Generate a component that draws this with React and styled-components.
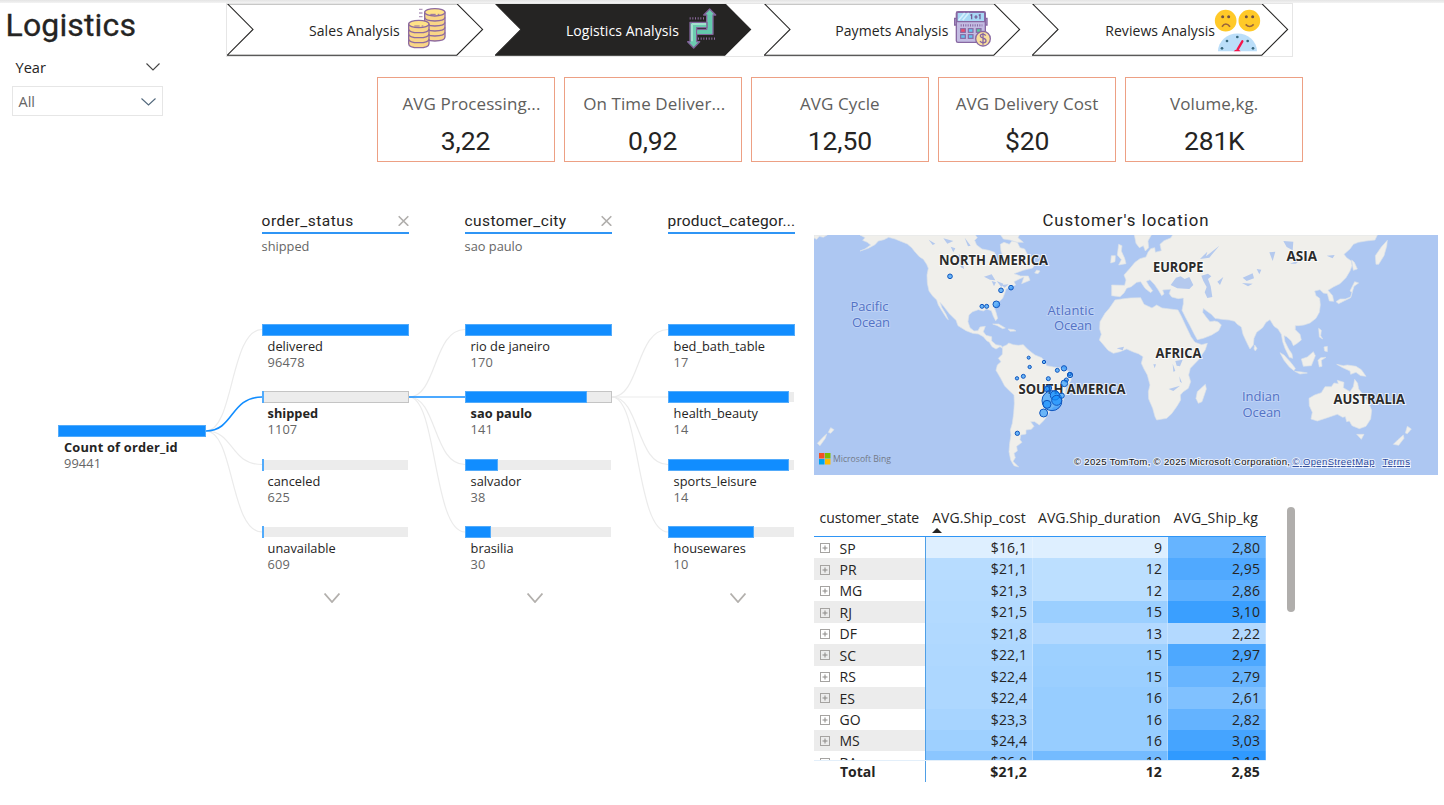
import React from "react";
import styled, { createGlobalStyle } from "styled-components";

const UI = `"Open Sans", "Noto Sans", sans-serif`;
const DIN = `Roboto, "Liberation Sans", sans-serif`;
const BLUE = "#118dff";

const Global = createGlobalStyle`
  * { box-sizing: border-box; }
  body { margin: 0; background: #fff; font-family: ${UI}; color: #252423; overflow: hidden; }
`;

const Page = styled.main`
  width: 1444px;
  height: 805px;
  display: flex;
  flex-direction: column;
  overflow: hidden;
  background: #fff;
`;
const TopStrip = styled.div`
  height: 3px;
  flex: none;
  background: linear-gradient(#e4e4e4, #f3f3f3);
`;
const Header = styled.header`
  display: flex;
  height: 206px;
  flex: none;
`;
const Side = styled.div`
  width: 226px;
  flex: none;
`;
const Title = styled.h1`
  margin: 4px 0 0 5.5px;
  font: 400 32px/36px ${DIN};
  letter-spacing: 0.15px;
  -webkit-text-stroke: 0.3px #252423;
`;
const Slicer = styled.section`
  width: 151px;
  margin: 14px 0 0 11.5px;
`;
const SlicerHead = styled.div`
  display: flex;
  justify-content: space-between;
  align-items: center;
  height: 22px;
  padding: 0 3px 3px 4px;
  font-size: 14.6px;
  font-weight: 500;
`;
const Select = styled.div`
  margin-top: 7px;
  height: 30px;
  padding: 1px 6px 0 6px;
  border: 1px solid #e6e6e6;
  display: flex;
  align-items: center;
  justify-content: space-between;
  font-size: 14.5px;
  color: #666;
`;
const Main = styled.div`
  flex: 1;
`;
const Nav = styled.nav`
  display: flex;
  width: 1067px;
  height: 54px;
  border: 1px solid #e6e6e6;
`;
const NavItem = styled.a`
  position: relative;
  width: 268.4px;
  flex: none;
  height: 51px;
  display: flex;
  align-items: center;
  padding-left: ${(p) => p.$pad}px;
  color: ${(p) => (p.$active ? "#fff" : "#252423")};
`;
const Chevron = styled.svg`
  position: absolute;
  left: 0;
  top: 0;
`;
const NavLabel = styled.span`
  position: relative;
  width: ${(p) => p.$w}px;
  flex: none;
  padding-top: 1px;
  font-size: 14px;
  letter-spacing: 0.07px;
  white-space: nowrap;
`;
const NavIcon = styled.svg`
  position: relative;
  flex: none;
  margin-top: ${(p) => p.$mt || 0}px;
`;
const Kpis = styled.section`
  display: flex;
  gap: 9.2px;
  margin: 20px 0 0 150.5px;
`;
const Kpi = styled.article`
  width: 178px;
  height: 85px;
  border: 1.4px solid #eda084;
  text-align: center;
  padding-top: 14px;
`;
const KpiLabel = styled.div`
  padding-left: ${(p) => p.$shift || 0}px;
  font-size: 17px;
  line-height: 24px;
  color: #605e5c;
  white-space: nowrap;
  letter-spacing: 0.1px;
`;
const KpiValue = styled.div`
  margin-top: 9px;
  font: 400 26.5px/32px ${DIN};
  letter-spacing: -0.15px;
`;

const Body = styled.div`
  display: flex;
  flex: 1;
`;
const Tree = styled.section`
  width: 814px;
  flex: none;
  display: flex;
  padding-left: 58px;
`;
const Root = styled.div`
  width: 147.6px;
  margin-top: 216px;
`;
const Column = styled.div`
  width: ${(p) => p.$w}px;
  flex: none;
`;
const LevelHead = styled.div`
  height: 25px;
  display: flex;
  align-items: center;
  justify-content: space-between;
  border-bottom: 2.5px solid #2f95f5;
  font: 400 15.5px/20px ${DIN};
  letter-spacing: ${(p) => p.$ls}px;
  white-space: nowrap;
`;
const LevelValue = styled.div`
  height: 24px;
  font-size: 12.8px;
  line-height: 24px;
  color: #666;
`;
const Nodes = styled.div`
  margin-top: 65.5px;
`;
const NodeBox = styled.div`
  height: 67.6px;
`;
const Track = styled.div`
  height: 12px;
  background: #ececec;
  border: 1px solid ${(p) => (p.$selected ? "#c4c4c4" : "transparent")};
  background-clip: padding-box;
`;
const Fill = styled.div`
  height: 12px;
  margin: -1px;
  width: ${(p) => p.$w}px;
  background: ${BLUE};
  border: 1px solid #52abfb;
  border-width: 1px 0.5px;
`;
const NodeName = styled.div`
  padding-left: 6px;
  margin-top: 2px;
  font-size: 12.8px;
  line-height: 17px;
  font-weight: ${(p) => (p.$bold ? 700 : 400)};
  letter-spacing: ${(p) => p.$ls || 0}px;
  white-space: nowrap;
`;
const NodeValue = styled.div`
  padding-left: 6px;
  font-size: 12.8px;
  line-height: 15px;
  letter-spacing: 0.1px;
  color: #666;
`;
const Links = styled.svg`
  flex: none;
  margin-top: 114.5px;
`;
const More = styled.div`
  width: 147px;
  margin-top: -1px;
  padding: 0 0 0 62px;
  line-height: 0;
`;

const Right = styled.section`
  width: 624px;
  flex: none;
`;
const MapTitle = styled.h2`
  margin: 0;
  height: 26px;
  text-align: center;
  font: 400 16.8px/23px ${DIN};
  letter-spacing: 1px;
`;
const MapSvg = styled.svg`
  display: block;
`;
const TableWrap = styled.div`
  display: flex;
  margin-top: 31px;
`;
const Matrix = styled.div`
  width: 452px;
`;
const gridCols = "112px 107px 135px 98px";
const HeadRow = styled.div`
  display: grid;
  grid-template-columns: ${gridCols};
  height: 31px;
  border-bottom: 1px solid #2f95f5;
  font-size: 14px;
  line-height: 24px;
`;
const HeadCell = styled.div`
  padding-left: ${(p) => p.$pl}px;
  white-space: nowrap;
  letter-spacing: ${(p) => p.$ls || 0}px;
`;
const SortMark = styled.svg`
  display: block;
  margin-top: -2.5px;
`;
const Rows = styled.div`
  height: 222.5px;
  overflow: hidden;
`;
const Row = styled.div`
  display: grid;
  grid-template-columns: ${gridCols};
  height: 21.45px;
  font-size: 14px;
  line-height: 21.5px;
`;
const StateCell = styled.div`
  display: flex;
  align-items: center;
  gap: 9.5px;
  padding-left: 6px;
  background: ${(p) => (p.$alt ? "#ececec" : "#fff")};
  border-right: 1px solid #4f9fe6;
`;
const Cell = styled.div`
  background: ${(p) => p.$bg};
  border-right: 1px solid rgba(255, 255, 255, 0.25);
  border-bottom: 1px solid rgba(255, 255, 255, 0.25);
  padding-right: 5px;
  text-align: right;
  letter-spacing: 0.1px;
`;
const TotalRow = styled(Row)`
  font-weight: 700;
  border-top: 1px solid #e3effa;
  line-height: 21px;
`;
const TotalName = styled.div`
  padding-left: 26px;
  border-right: 1px solid #4f9fe6;
`;
const TotalCell = styled.div`
  text-align: right;
  padding-right: 6px;
  letter-spacing: 0.15px;
`;
const ScrollThumb = styled.div`
  width: 8px;
  height: 105px;
  margin: 1px 0 0 21px;
  border-radius: 4px;
  background: #b0aeac;
`;

const Down = ({ w, h, color, sw = 1.1 }) => (
  <svg width={w} height={h} viewBox={`0 0 ${w} ${h}`} fill="none" stroke={color} strokeWidth={sw}>
    <path d={`M.5 .5 L${w / 2} ${h - 1} L${w - 0.5} .5`} />
  </svg>
);

const Coin = ({ x, y, n, w }) => (
  <g fill="#f9d686" stroke="#8d6a9f" strokeWidth="4">
    {Array.from({ length: n }, (_, i) => n - 1 - i).map((i) => (
      <path key={i} d={`M${x} ${y + i * 15} v14 c0 16 ${w} 16 ${w} 0 v-14`} />
    ))}
    <ellipse cx={x + w / 2} cy={y} rx={w / 2} ry="11" fill="#ffe287" />
    <path d={`M${x + 17} ${y + 6} h16 m6 0 h5`} strokeWidth="3" />
  </g>
);
const CoinsIcon = () => (
  <NavIcon width="40" height="44" viewBox="1221 20 120 132" $mt={-1}>
    <path d="M1258 27h9M1258 38h9M1258 49h9" stroke="#8d6a9f" strokeWidth="4" strokeDasharray="4 2" />
    <Coin x={1274} y={36} n={5} w={61} />
    <Coin x={1226} y={71} n={4} w={61} />
  </NavIcon>
);
const RouteIcon = () => (
  <NavIcon width="32" height="42" viewBox="858 20 96 126" $mt={-3}>
    <g fill="none" stroke="#8d6a9f" strokeWidth="7" strokeDasharray="3 5">
      <path d="M869 54h48M894 115h52" />
    </g>
    <g fill="#6ccbb0" stroke="#81639a" strokeWidth="4" strokeLinejoin="round">
      <path d="M929 26 L947 44 H939 V102 H889 V88 H920 V44 H911 Z" />
      <path d="M870 66 H921 V82 H890 V124 H899 L881 143 L863 124 H870 Z" />
    </g>
    <path d="M876 71v52M876 71h42" stroke="#a2e0cd" strokeWidth="6" />
    <path d="M892 95h38V44" fill="none" stroke="#62c9ac" strokeWidth="10" />
  </NavIcon>
);
const CalcIcon = () => (
  <NavIcon width="39" height="38" viewBox="280 30 117 114" $mt={-1}>
    <g stroke="#8868a2" strokeWidth="4">
      <path d="M289 55h-4v20h4M378 55h4v20h-4" fill="#b9b2dc" />
      <rect x="290" y="35" width="87" height="92" rx="5" fill="#c3bce2" />
      <path d="M292 37h83v28h-83z" fill="#a7d8f5" />
      <g fill="#62c3ef" strokeWidth="3.5">
        <rect x="303" y="86" width="14" height="11" fill="#ee4b69" />
        <rect x="326" y="86" width="14" height="11" />
        <rect x="350" y="86" width="14" height="11" fill="#5bc8a0" />
        <rect x="303" y="104" width="14" height="11" />
        <rect x="326" y="104" width="14" height="11" />
      </g>
      <path d="M303 76h65" strokeWidth="7" strokeDasharray="3 4" />
      <circle cx="370" cy="116" r="22" fill="#f9df9d" />
      <path d="M378 107c-3-6-16-6-16 1 0 8 17 5 17 14 0 8-15 8-18 1M370 98v36" fill="none" />
    </g>
    <path d="M297 61l18-22M309 61l18-22" stroke="#d5effd" strokeWidth="5" />
    <path d="M332 46l4-2v14M354 51h-10M349 46v10M357 46l4-2v14" fill="none" stroke="#70518d" strokeWidth="3.5" />
  </NavIcon>
);
const ReviewsIcon = () => (
  <NavIcon width="47" height="43" viewBox="1062 26 141 129" $mt={1}>
    <circle cx="1097" cy="61" r="32.5" fill="#ffc928" />
    <circle cx="1168" cy="61" r="32.5" fill="#ffc928" />
    <g fill="#705044">
      <circle cx="1088" cy="49" r="4.5" /><circle cx="1106" cy="49" r="4.5" />
      <circle cx="1159" cy="49" r="4.5" /><circle cx="1178" cy="49" r="4.5" />
    </g>
    <path d="M1086 79q11-16 24 0M1157 72q12 13 24 0" fill="none" stroke="#9a653b" strokeWidth="5" />
    <path d="M1074 153a58 53 0 0 1 117 0z" fill="#bbdef9" />
    <g fill="#37667c">
      <circle cx="1086" cy="144" r="4" /><circle cx="1101" cy="122" r="4" /><circle cx="1132" cy="110" r="4" />
      <circle cx="1163" cy="122" r="4" /><circle cx="1179" cy="144" r="4" />
    </g>
    <path d="M1121 153a12 11 0 0 1 21 0z" fill="#f5144b" />
    <path d="M1133 147l14-24" stroke="#f5144b" strokeWidth="7" strokeLinecap="round" />
  </NavIcon>
);

const navItems = [
  { label: "Sales Analysis", pad: 82, w: 98, Icon: CoinsIcon },
  { label: "Logistics Analysis", pad: 70.5, w: 120, Icon: RouteIcon, active: true },
  { label: "Paymets Analysis", pad: 71.5, w: 117.5, Icon: CalcIcon },
  { label: "Reviews Analysis", pad: 73, w: 108.5, Icon: ReviewsIcon },
];

const kpis = [
  ["AVG Processing...", "3,22", 12],
  ["On Time Deliver...", "0,92", 3],
  ["AVG Cycle", "12,50"],
  ["AVG Delivery Cost", "$20"],
  ["Volume,kg.", "281K"],
];

const levels = [
  {
    name: "order_status", value: "shipped", w: 147, ls: 0.5, from: 107, active: 1,
    nodes: [["delivered", 96478, 147], ["shipped", 1107, 2], ["canceled", 625, 1], ["unavailable", 609, 1]], selected: 1,
  },
  {
    name: "customer_city", value: "sao paulo", w: 147, ls: 0.4, from: 73, active: 1,
    nodes: [["rio de janeiro", 170, 147], ["sao paulo", 141, 122], ["salvador", 38, 33], ["brasilia", 30, 26]], selected: 1,
  },
  {
    name: "product_categor...", value: "", w: 127, ls: 0.2, from: 73,
    nodes: [["bed_bath_table", 17, 127], ["health_beauty", 14, 121], ["sports_leisure", 14, 121], ["housewares", 10, 86]],
  },
];

const Connector = ({ from, active }) => {
  const ends = [5.5, 73, 140.5, 208];
  const d = (y) => `M0 ${from} C28 ${from} 24 ${y} 56 ${y}`;
  return (
    <Links width="56" height="216" viewBox="0 0 56 216" fill="none">
      {ends.map((y, i) => i !== active && <path key={i} d={d(y)} stroke="#ebebeb" strokeWidth="1.2" />)}
      {active !== undefined && <path d={d(ends[active])} stroke={BLUE} strokeWidth="1.6" />}
    </Links>
  );
};

const Level = ({ level }) => (
  <>
    <Connector from={level.from} active={level.active} />
    <Column $w={level.w}>
      <LevelHead $ls={level.ls}>
        <span>{level.name}</span>
        {level.value && (
          <svg width="11" height="11" viewBox="0 0 11 11" stroke="#b0aeac" strokeWidth="1.6">
            <path d="M.7 1.2l9.6 9.6M10.3 1.2L.7 10.8" />
          </svg>
        )}
      </LevelHead>
      <LevelValue>{level.value}</LevelValue>
      <Nodes>
        {level.nodes.map(([name, value, w], i) => (
          <NodeBox key={name}>
            <Track $selected={level.selected === i}><Fill $w={w} /></Track>
            <NodeName $bold={level.selected === i}>{name}</NodeName>
            <NodeValue>{value}</NodeValue>
          </NodeBox>
        ))}
      </Nodes>
      <More><Down w={16} h={10} color="#b3b0ad" sw={1.8} /></More>
    </Column>
  </>
);

const americas = [
  "M12 90H52L40 97 28 94 20 103 12 99Z",
  "M150 90L165 98 158 106 172 112 182 120 165 132 150 138 175 130 195 119 205 108 222 104 236 97 255 102 275 110 292 117 305 128 316 142 328 155 340 163 350 178 355 190 351 210 352 235 357 258 368 273 380 285 385 300 396 318 410 340 415 344 408 328 396 308 390 292 402 305 418 326 438 346 444 362 468 377 488 385 505 387 520 395 530 407 538 412 546 425 558 432 570 425 580 432 574 422 558 419 545 408 545 395 528 391 520 380 526 364 510 366 504 377 492 378 480 368 474 350 477 330 488 320 505 314 520 318 530 312 544 317 550 334 557 347 563 340 558 322 553 308 565 292 578 280 584 265 588 252 603 246 617 240 612 230 628 222 642 216 635 236 660 226 655 213 632 213 612 206 640 196 668 189 676 176 666 158 652 148 644 132 630 128 622 112 606 108 598 118 582 112 571 118 573 138 580 158 572 178 560 164 554 142 536 136 516 132 500 120 494 106 502 98 496 90Z",
  "M572 90L580 102 600 105 622 112 640 112 624 98 628 90Z",
  "M680 195L690 198 684 206 674 204Z",
  "M548 357L566 357 586 369 578 371 562 362ZM594 372L612 374 618 378 600 379Z",
  "M578 425L590 420 596 414 610 419 625 421 640 419 650 430 663 441 675 450 695 458 705 470 710 482 730 486 758 490 778 500 786 512 782 528 768 548 766 568 758 590 748 601 730 606 722 614 714 630 700 648 688 660 674 650 662 650 672 664 664 673 648 675 648 687 632 690 630 704 636 712 620 724 622 738 612 745 616 758 609 769 626 786 612 782 602 765 597 740 599 715 603 690 601 675 607 655 611 625 613 595 612 570 598 557 584 543 572 520 558 496 562 480 573 470 565 460 577 448Z",
  "M22 715L42 694 50 687 46 700 30 722ZM55 682L62 668 72 674 62 685Z",
  "M926 118L936 122 934 138 944 160 948 176 926 180 934 164 922 150ZM904 152L916 152 915 170 902 174Z",
];
const oldWorld = [
  "M-25 240L14 241 18 225 12 210 30 190 45 172 60 161 78 156 84 142 92 131 104 128 106 142 124 137 120 118 132 107 152 99 158 90H772L765 105 738 108 715 112 700 118 690 132 672 148 680 158 694 168 696 182 690 198 678 218 660 236 640 246 624 256 638 272 641 289 628 288 622 266 610 264 600 254 584 258 588 272 599 280 601 300 598 322 588 340 570 354 552 360 536 362 526 362 526 374 540 388 544 405 530 416 520 422 514 408 500 395 492 392 495 410 506 432 516 447 518 460 508 457 495 430 488 410 484 388 474 372 462 364 450 344 438 352 428 368 410 382 402 400 400 420 390 432 380 412 369 388 364 366 352 358 344 349 328 345 305 343 285 340 274 328 260 318 250 310 248 322 260 338 270 350 284 348 295 351 304 360 296 377 275 390 250 400 232 404 222 386 210 362 197 338 186 316 190 296 190 279 175 281 155 276 148 266 152 253 128 255 132 267 125 272 115 255 103 238 90 224 79 229 86 241 98 257 92 263 75 250 62 230 50 232 34 245 20 250 12 264 0 275-25 272Z",
  "M-15 285L5 282 30 279 62 278 72 298 96 309 110 300 126 309 150 312 174 315 184 334 198 364 213 395 225 412 245 419 262 415 256 434 235 465 211 490 206 510 212 530 205 550 190 560 181 570 182 585 172 602 155 626 140 640 110 645 105 635 98 610 86 582 85 560 90 540 82 510 72 492 64 475 69 455 55 446 40 441 20 432 0 440-20 445-36 436-50 419-62 405-56 388-61 372-60 350-45 325-32 310Z",
  "M256 538L259 552 246 590 235 595 228 580 232 560Z",
  "M43 90L48 115 58 128 70 122 76 138 86 128 84 108 94 90Z",
  "M404 420L411 430 406 438 402 432ZM480 443L492 450 512 472 526 490 522 497 508 486 492 466ZM524 499L545 501 562 504 540 507Z",
  "M544 462L562 456 580 440 586 452 574 482 550 484ZM594 466L602 458 618 457 604 466 606 484 598 486Z",
  "M596 370L604 376 602 392 608 402 598 396ZM612 426L622 424 622 440 614 438Z",
  "M650 478L670 482 682 480 708 484 724 494 738 514 722 512 708 502 692 508 690 498 668 488Z",
  "M567 580L584 570 604 563 615 545 634 545 642 534 655 536 652 526 672 532 670 548 690 560 700 545 704 523 713 535 716 552 732 572 746 592 755 616 752 642 738 664 718 671 696 662 688 648 680 650 676 635 668 637 652 628 622 638 592 648 573 642 577 622 568 602Z",
  "M710 688L732 688 724 703Z",
  "M820 718L834 704 850 690 852 700 836 721ZM856 684L862 664 874 672 862 686Z",
  "M648 290L660 282 676 282 692 276 696 262 690 258 704 230 716 234 702 244 692 278 672 288 656 296ZM695 165L703 172 712 192 700 196Z",
  "M768 178L766 152 784 126 802 106 800 124 792 152 776 178Z",
];
const waters = [
  "M152 240L168 218 182 214 194 222 208 216 220 240 208 252 172 250Z",
  "M244 212L264 206 274 214 264 222 272 244 277 276 262 279 254 262 260 246 250 228Z",
  "M368 218L398 205 402 220 380 228ZM366 234L398 236 384 244ZM292 230L310 216 300 240ZM448 142L466 140 458 168ZM410 192L424 194 418 208ZM510 176L540 164 528 176ZM490 108L520 110 518 136 500 126ZM240 162L262 140 258 154 298 122 268 158ZM620 152L644 150 638 160Z",
  "M166 468L188 464 180 484 170 482ZM158 476L166 498 160 500ZM178 514L186 534 180 530ZM146 552L180 542 160 558ZM100 478L108 478 104 490ZM-10 430L12 425 8 436Z",
];
const naWaters = [
  "M522 215L545 208 556 226 540 224ZM545 228L558 232 552 244ZM560 228L580 236 574 246ZM574 240L596 238 584 248ZM446 148L456 152 462 192 452 186ZM422 125L436 130 430 142ZM400 100L430 108 412 116ZM356 104L376 116 368 120ZM464 98L482 122 474 124Z",
];
const dots = [
  [420, 214, 7], [573, 256, 7], [603, 248, 7], [516, 304, 6], [530, 304, 6], [559, 298, 10], [656, 458, 4.5],
  [702, 471, 5], [659, 486, 5], [742, 496, 6], [762, 490, 8], [780, 510, 8], [779, 507, 5], [640, 514, 6], [621, 520, 5],
  [715, 521, 6], [769, 525, 6], [763, 535, 10], [716, 549, 9], [711, 552, 8], [726, 587, 30], [735, 571, 14],
  [740, 586, 15], [755, 572, 8], [711, 598, 12], [701, 624, 12], [622, 685, 6.5],
];
const continents = [
  ["NORTH AMERICA", 125, 30, 109], ["SOUTH AMERICA", 204.5, 159, 107], ["EUROPE", 339, 37, 50.5],
  ["ASIA", 472.5, 26, 30.5], ["AFRICA", 341.5, 122.5, 46], ["AUSTRALIA", 519.5, 169, 71.5],
];
const oceans = [
  ["Pacific", 36.5, 76, 38], ["Ocean", 38, 91.5, 38], ["Atlantic", 233.5, 79.5, 46.5], ["Ocean", 240, 95, 38],
  ["Indian", 428, 166, 38], ["Ocean", 428.5, 182, 38.5],
];
const MapText = styled.text`
  font-family: ${(p) => p.$font || UI};
  font-size: ${(p) => p.$size}px;
  font-weight: ${(p) => p.$weight || 400};
  fill: ${(p) => p.$color};
  stroke: ${(p) => p.$halo || "none"};
  stroke-width: 2px;
  paint-order: stroke;
  text-decoration: ${(p) => (p.$link ? "underline" : "none")};
`;
const credit = { $size: 9.6, $font: `"Liberation Sans", sans-serif`, $halo: "rgba(255,255,255,.7)" };

const WorldMap = () => (
  <MapSvg width="624" height="240" viewBox="0 0 624 240">
    <rect width="624" height="240" fill="#adc7f2" />
    <g transform="translate(-4 -30) scale(.33333)" strokeLinejoin="round">
      <g fill="#f0efeb" stroke="#dde2e8" strokeWidth="2">{americas.map((d) => <path key={d} d={d} />)}</g>
      {naWaters.map((d) => <path key={d} d={d} fill="#b4c9ee" />)}
    </g>
    <g transform="translate(306 -30) scale(.33333)" strokeLinejoin="round">
      <g fill="#f0efeb" stroke="#dde2e8" strokeWidth="2">{oldWorld.map((d) => <path key={d} d={d} />)}</g>
      {waters.map((d) => <path key={d} d={d} fill="#b4c9ee" />)}
    </g>
    {oceans.map(([t, x, y, w], i) => (
      <MapText key={i} x={x} y={y} textLength={w} $size={13} $color="#5373c6" $halo="rgba(200,216,246,.7)">{t}</MapText>
    ))}
    {continents.map(([t, x, y, w]) => (
      <MapText key={t} x={x} y={y} textLength={w} lengthAdjust="spacingAndGlyphs" $size={13.3} $weight={700} $color="#2b2b2b" $halo="rgba(255,255,255,.75)">{t}</MapText>
    ))}
    <g transform="translate(-4 -30) scale(.33333)" fill="rgba(17,141,255,.6)" stroke="#0f55bd" strokeWidth="3">
      {dots.map(([x, y, r], i) => <circle key={i} cx={x} cy={y} r={r} />)}
    </g>
    <path d="M5 218h5.5v5.5H5z" fill="#f25022" />
    <path d="M11 218h5.5v5.5H11z" fill="#7fba00" />
    <path d="M5 224h5.5v5.5H5z" fill="#00a4ef" />
    <path d="M11 224h5.5v5.5H11z" fill="#ffb900" />
    <MapText x="19" y="227.2" textLength="58" lengthAdjust="spacingAndGlyphs" $size={9.5} $weight={500} $color="#737a86">Microsoft Bing</MapText>
    <MapText x="260" y="230" textLength="216" {...credit} $color="#111">© 2025 TomTom, © 2025 Microsoft Corporation,</MapText>
    <MapText x="478.5" y="230" textLength="82" {...credit} $color="#2d4a9e" $link>© OpenStreetMap</MapText>
    <MapText x="568.5" y="230" textLength="27.5" {...credit} $color="#2d4a9e" $link>Terms</MapText>
  </MapSvg>
);

const rows = [
  ["SP", "$16,1", "#deefff", "9", "#deefff", "2,80", "#66b4ff"],
  ["PR", "$21,1", "#b7dcff", "12", "#bcdfff", "2,95", "#50a9ff"],
  ["MG", "$21,3", "#b5dbff", "12", "#bcdfff", "2,86", "#5eb0ff"],
  ["RJ", "$21,5", "#b3daff", "15", "#9bcfff", "3,10", "#3a9fff"],
  ["DF", "$21,8", "#b1d9ff", "13", "#b3d9ff", "2,22", "#b3d9ff"],
  ["SC", "$22,1", "#afd8ff", "15", "#9dd0ff", "2,97", "#4da8ff"],
  ["RS", "$22,4", "#add7ff", "15", "#9bcfff", "2,79", "#68b5ff"],
  ["ES", "$22,4", "#add7ff", "16", "#97cdff", "2,61", "#80c1ff"],
  ["GO", "$23,3", "#a7d4ff", "16", "#97cdff", "2,82", "#64b3ff"],
  ["MS", "$24,4", "#9ed0ff", "16", "#97cdff", "3,03", "#45a4ff"],
  ["BA", "$26,0", "#8bc6ff", "19", "#74bbff", "3,18", "#309aff"],
];

const Plus = () => (
  <svg width="10" height="10" viewBox="0 0 10 10" fill="none" stroke="#a5a3a1">
    <rect x=".5" y=".5" width="9" height="9" />
    <path d="M2.5 5h5M5 2.5v5" stroke="#8a8886" />
  </svg>
);

export default function App() {
  return (
    <Page>
      <Global />
      <TopStrip />
      <Header>
        <Side>
          <Title>Logistics</Title>
          <Slicer>
            <SlicerHead>Year<Down w={14} h={8} color="#444" /></SlicerHead>
            <Select>All<Down w={15} h={8} color="#52687c" /></Select>
          </Slicer>
        </Side>
        <Main>
          <Nav>
            {navItems.map(({ label, pad, w, Icon, active }) => (
              <NavItem key={label} $pad={pad} $active={active}>
                <Chevron width="258" height="52" viewBox="0 0 258 52" fill={active ? "#252423" : "#fff"} stroke="#252423" strokeWidth="1.1">
                  <path d="M.3 -.4 H229.8 L255.6 25.4 L229.8 51.2 H.3 L26 25.4 Z" />
                </Chevron>
                <NavLabel $w={w}>{label}</NavLabel>
                <Icon />
              </NavItem>
            ))}
          </Nav>
          <Kpis>
            {kpis.map(([label, value, shift]) => (
              <Kpi key={label}>
                <KpiLabel $shift={shift}>{label}</KpiLabel>
                <KpiValue>{value}</KpiValue>
              </Kpi>
            ))}
          </Kpis>
        </Main>
      </Header>
      <Body>
        <Tree>
          <Root>
            <Track><Fill $w={148} /></Track>
            <NodeName $bold $ls={0.2}>Count of order_id</NodeName>
            <NodeValue>99441</NodeValue>
          </Root>
          {levels.map((l) => <Level key={l.name} level={l} />)}
        </Tree>
        <Right>
          <MapTitle>Customer's location</MapTitle>
          <WorldMap />
          <TableWrap>
            <Matrix>
              <HeadRow>
                <HeadCell $pl={5.5} $ls={-0.05}>customer_state</HeadCell>
                <HeadCell $pl={6} $ls={0.12}>
                  AVG.Ship_cost
                  <SortMark width="10" height="5" viewBox="0 0 10 5"><path d="M0 5L5 0l5 5z" fill="#252423" /></SortMark>
                </HeadCell>
                <HeadCell $pl={5} $ls={0.06}>AVG.Ship_duration</HeadCell>
                <HeadCell $pl={5.5} $ls={0.15}>AVG_Ship_kg</HeadCell>
              </HeadRow>
              <Rows>
                {rows.map((r, i) => (
                  <Row key={r[0]}>
                    <StateCell $alt={i % 2 === 1}><Plus />{r[0]}</StateCell>
                    <Cell $bg={r[2]}>{r[1]}</Cell>
                    <Cell $bg={r[4]}>{r[3]}</Cell>
                    <Cell $bg={r[6]}>{r[5]}</Cell>
                  </Row>
                ))}
              </Rows>
              <TotalRow>
                <TotalName>Total</TotalName>
                <TotalCell>$21,2</TotalCell>
                <TotalCell>12</TotalCell>
                <TotalCell>2,85</TotalCell>
              </TotalRow>
            </Matrix>
            <ScrollThumb />
          </TableWrap>
        </Right>
      </Body>
    </Page>
  );
}
